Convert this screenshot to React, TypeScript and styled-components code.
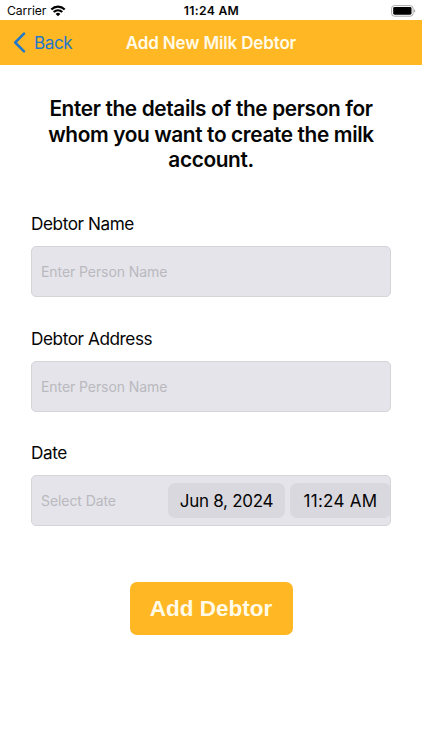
import React from "react";
import styled, { createGlobalStyle } from "styled-components";

const GlobalStyle = createGlobalStyle`
  * { box-sizing: border-box; }
  body { margin: 0; background: #fff; font-family: Inter, "Liberation Sans", sans-serif; color: #050505; }
`;

const Screen = styled.main`
  display: flex;
  flex-direction: column;
  width: 422px;
  height: 750px;
  background: #fff;
  overflow: hidden;
`;

const StatusBar = styled.header`
  display: grid;
  grid-template-columns: 1fr auto 1fr;
  align-items: center;
  height: 20.4px;
  padding: 1px 6px 0 7px;
`;

const Carrier = styled.div`
  display: flex;
  align-items: center;
  gap: 4px;
`;

const StatusText = styled.span<{ $bold?: boolean; $spacing: number }>`
  font-size: 12.2px;
  line-height: 20px;
  font-weight: ${(p) => (p.$bold ? 600 : 400)};
  letter-spacing: ${(p) => p.$spacing}px;
`;

const Battery = styled.svg`
  justify-self: end;
`;

const NavBar = styled.nav`
  display: grid;
  grid-template-columns: 1fr auto 1fr;
  align-items: center;
  height: 45px;
  padding: 0 13px;
  background: #ffb723;
`;

const BackButton = styled.button`
  display: flex;
  align-items: center;
  gap: 8px;
  padding: 0;
  border: 0;
  background: none;
  color: #2078cc;
  font: 400 17px/22px Inter, sans-serif;
  letter-spacing: -0.35px;
`;

const NavTitle = styled.h1`
  margin: 0;
  color: #fffbe8;
  font-size: 17px;
  font-weight: 600;
  line-height: 22px;
  letter-spacing: -0.15px;
`;

const Content = styled.section`
  display: flex;
  flex-direction: column;
  padding: 30.8px 31px 0;
`;

const Heading = styled.h2`
  margin: 0 0 39.2px;
  font-size: 20.8px;
  font-weight: 600;
  line-height: 25.6px;
  letter-spacing: -0.36px;
  text-align: center;
`;

const Field = styled.div`
  height: 114.4px;
`;

const Label = styled.div`
  height: 34px;
  font-size: 17.2px;
  line-height: 24px;
  letter-spacing: -0.43px;
`;

const InputBox = styled.div`
  display: flex;
  align-items: center;
  justify-content: space-between;
  height: 51px;
  padding-left: 9px;
  border: 1px solid #d5d5d9;
  border-radius: 5px;
  background: #e5e4ea;
  overflow: hidden;
`;

const Placeholder = styled.span`
  color: #b9b9be;
  font-size: 14px;
  letter-spacing: -0.08px;
`;

const Pickers = styled.div`
  display: flex;
  gap: 5px;
  margin-right: -1px;
`;

const Chip = styled.button<{ $width: number; $spacing: number }>`
  width: ${(p) => p.$width}px;
  height: 35px;
  padding: 0;
  border: 0;
  border-radius: 7px;
  background: #d9d8de;
  color: #050505;
  font: 400 17px/36px Inter, sans-serif;
  letter-spacing: ${(p) => p.$spacing}px;
  white-space: nowrap;
`;

const SubmitButton = styled.button`
  align-self: center;
  width: 163px;
  height: 53px;
  margin-top: 26.6px;
  padding: 0;
  border: 0;
  border-radius: 7px;
  background: #ffb723;
  color: #fffbe8;
  font: 700 22.5px/54px "Liberation Sans", Arial, sans-serif;
`;

export default function App() {
  return (
    <Screen>
      <GlobalStyle />
      <StatusBar>
        <Carrier>
          <StatusText $spacing={-0.1}>Carrier</StatusText>
          <svg width="16" height="12" viewBox="0 0 15 12" fill="none" stroke="#000" strokeWidth="2.1">
            <path d="M.8 4.5C4.6.7 10.4.7 14.2 4.5" />
            <path d="M3.2 7.1C5.7 4.7 9.3 4.7 11.8 7.1" />
            <path d="M5.1 8.9a3.4 3.4 0 0 1 4.8 0L7.5 11.3Z" fill="#000" stroke="none" />
          </svg>
        </Carrier>
        <StatusText $bold $spacing={0.3}>11:24 AM</StatusText>
        <Battery width="25" height="12" viewBox="0 0 25 12">
          <rect x=".6" y=".6" width="21.5" height="10.6" rx="2.8" fill="#fff" stroke="#a9a9a9" strokeWidth="1" />
          <rect x="2.2" y="2.1" width="18.3" height="7.6" rx="1.4" fill="#000" />
          <path d="M23.3 4.2v3.4c1.3-.4 1.3-3 0-3.4Z" fill="#888" />
        </Battery>
      </StatusBar>
      <NavBar>
        <BackButton>
          <svg width="13" height="21" viewBox="0 0 13 21" fill="none" stroke="currentColor" strokeWidth="2.5" strokeLinecap="round" strokeLinejoin="round">
            <path d="M11 1.7 2.2 10.5 11 19.3" />
          </svg>
          Back
        </BackButton>
        <NavTitle>Add New Milk Debtor</NavTitle>
      </NavBar>
      <Content>
        <Heading>
          Enter the details of the person for
          <br />
          whom you want to create the milk
          <br />
          account.
        </Heading>
        <Field>
          <Label>Debtor Name</Label>
          <InputBox><Placeholder>Enter Person Name</Placeholder></InputBox>
        </Field>
        <Field>
          <Label>Debtor Address</Label>
          <InputBox><Placeholder>Enter Person Name</Placeholder></InputBox>
        </Field>
        <Field>
          <Label>Date</Label>
          <InputBox>
            <Placeholder>Select Date</Placeholder>
            <Pickers>
              <Chip $width={117} $spacing={-0.3}>Jun 8, 2024</Chip>
              <Chip $width={101} $spacing={0.3}>11:24 AM</Chip>
            </Pickers>
          </InputBox>
        </Field>
        <SubmitButton>Add Debtor</SubmitButton>
      </Content>
    </Screen>
  );
}
